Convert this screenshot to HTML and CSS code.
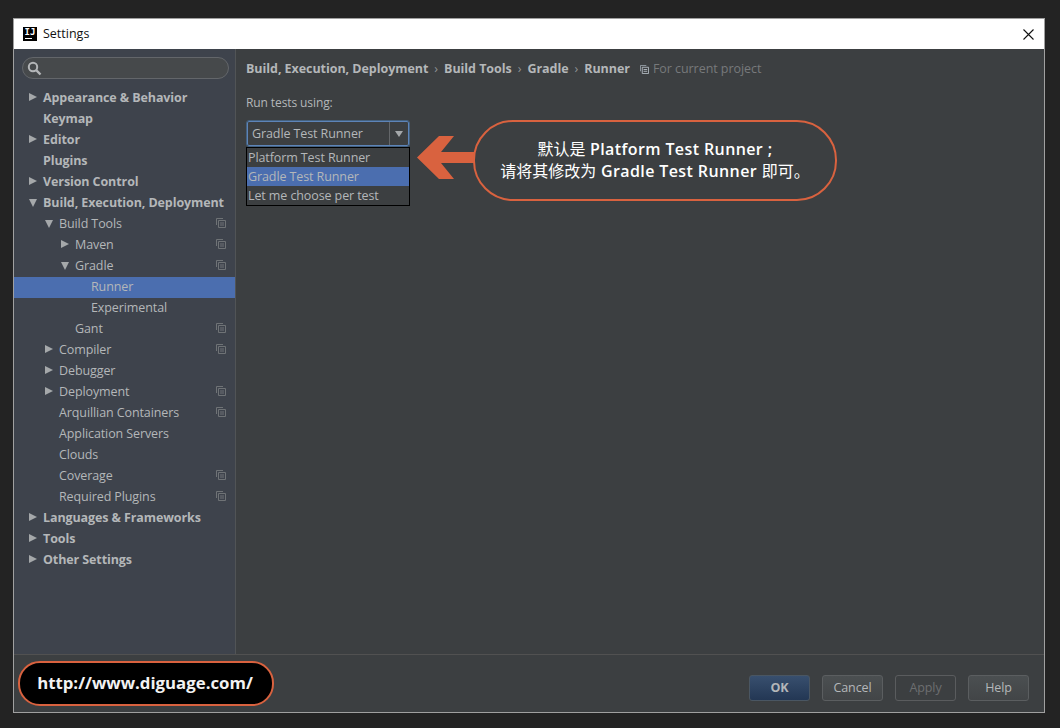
FILE: index.html
```html
<!DOCTYPE html>
<html lang="zh">
<head>
<meta charset="utf-8">
<title>Settings</title>
<link rel="stylesheet" href="styles.css">
</head>
<body>
<svg class="defs" width="0" height="0" aria-hidden="true">
  <symbol id="copy" viewBox="0 0 10 10">
    <path d="M0.5 7V0.5H7" fill="none" stroke="#6f7376"/>
    <path d="M2.5 2.5h7v7h-7z" fill="none" stroke="#6f7376"/>
    <path d="M4 5h4M4 7h4" fill="none" stroke="#6f7376"/>
  </symbol>
  <symbol id="copy-bright" viewBox="0 0 10 10">
    <path d="M0.5 7V0.5H7" fill="none" stroke="#9aa3ab"/>
    <path d="M2.5 2.5h7v7h-7z" fill="#3c3f41" stroke="#b4bcc4"/>
    <path d="M4 5h4M4 7h4" fill="none" stroke="#b4bcc4"/>
  </symbol>
</svg>
<main class="window">
  <header class="titlebar">
    <span class="logo"><span class="logo-text">IJ</span><span class="logo-bar"></span></span>
    <span class="title">Settings</span>
    <svg class="close" width="11" height="11" viewBox="0 0 11 11"><path d="M0.5 0.5l10 10M10.5 0.5l-10 10" stroke="#111" stroke-width="1.1" fill="none"/></svg>
  </header>
  <div class="body">
    <aside class="sidebar">
      <div class="search">
        <svg width="15" height="15" viewBox="0 0 15 15"><circle cx="6" cy="6" r="4.2" fill="none" stroke="#b4b6b8" stroke-width="2"/><path d="M9.2 9.2l4.3 4.3" stroke="#b4b6b8" stroke-width="2.4" fill="none"/></svg>
      </div>
      <nav class="tree">
        <div class="row l0 strong"><i class="tw right"></i><span>Appearance &amp; Behavior</span></div>
        <div class="row l0 strong"><i class="tw"></i><span>Keymap</span></div>
        <div class="row l0 strong"><i class="tw right"></i><span>Editor</span></div>
        <div class="row l0 strong"><i class="tw"></i><span>Plugins</span></div>
        <div class="row l0 strong"><i class="tw right"></i><span>Version Control</span></div>
        <div class="row l0 strong"><i class="tw down"></i><span>Build, Execution, Deployment</span></div>
        <div class="row l1"><i class="tw down"></i><span>Build Tools</span><svg class="ic"><use href="#copy"/></svg></div>
        <div class="row l2"><i class="tw right"></i><span>Maven</span><svg class="ic"><use href="#copy"/></svg></div>
        <div class="row l2"><i class="tw down"></i><span>Gradle</span><svg class="ic"><use href="#copy"/></svg></div>
        <div class="row l3 selected"><i class="tw"></i><span>Runner</span></div>
        <div class="row l3"><i class="tw"></i><span>Experimental</span></div>
        <div class="row l2"><i class="tw"></i><span>Gant</span><svg class="ic"><use href="#copy"/></svg></div>
        <div class="row l1"><i class="tw right"></i><span>Compiler</span><svg class="ic"><use href="#copy"/></svg></div>
        <div class="row l1"><i class="tw right"></i><span>Debugger</span></div>
        <div class="row l1"><i class="tw right"></i><span>Deployment</span><svg class="ic"><use href="#copy"/></svg></div>
        <div class="row l1"><i class="tw"></i><span>Arquillian Containers</span><svg class="ic"><use href="#copy"/></svg></div>
        <div class="row l1"><i class="tw"></i><span>Application Servers</span></div>
        <div class="row l1"><i class="tw"></i><span>Clouds</span></div>
        <div class="row l1"><i class="tw"></i><span>Coverage</span><svg class="ic"><use href="#copy"/></svg></div>
        <div class="row l1"><i class="tw"></i><span>Required Plugins</span><svg class="ic"><use href="#copy"/></svg></div>
        <div class="row l0 strong"><i class="tw right"></i><span>Languages &amp; Frameworks</span></div>
        <div class="row l0 strong"><i class="tw right"></i><span>Tools</span></div>
        <div class="row l0 strong"><i class="tw right"></i><span>Other Settings</span></div>
      </nav>
    </aside>
    <section class="content">
      <div class="crumbs">
        <b>Build, Execution, Deployment</b><em>›</em><b>Build Tools</b><em>›</em><b>Gradle</b><em>›</em><b>Runner</b>
        <svg class="ic project"><use href="#copy-bright"/></svg><span class="project-text">For current project</span>
      </div>
      <div class="field-label">Run tests using:</div>
      <div class="combo">
        <span class="combo-value">Gradle Test Runner</span>
        <span class="combo-btn"><i class="combo-arrow"></i></span>
      </div>
      <ul class="popup">
        <li>Platform Test Runner</li>
        <li class="active">Gradle Test Runner</li>
        <li>Let me choose per test</li>
      </ul>
      <svg class="arrow" width="57" height="44" viewBox="0 0 57 44"><path d="M0 21.5L22 0H37L24 16H57V27H24L37 43H22Z" fill="#d9623f"/></svg>
      <div class="callout"><span class="cn">默认是</span> Platform Test Runner ;<br><span class="cn">请将其修改为</span> Gradle Test Runner <span class="cn">即可。</span></div>
    </section>
  </div>
  <footer class="footer">
    <button class="btn primary">OK</button>
    <button class="btn">Cancel</button>
    <button class="btn disabled">Apply</button>
    <button class="btn">Help</button>
    <div class="badge">http://www.diguage.com/</div>
  </footer>
</main>
</body>
</html>
```
FILE: styles.css
```css
* { box-sizing: border-box; }
html, body { margin: 0; height: 100%; }
body {
  width: 1060px;
  height: 728px;
  padding: 18px 15px 15px 13px;
  background: #232323;
  font-family: "Open Sans", "Noto Sans CJK SC", sans-serif;
  font-size: 12.5px;
  letter-spacing: -0.1px;
  color: #b4b7b9;
  overflow: hidden;
}
.defs { position: absolute; }
.window {
  position: relative;
  height: 695px;
  border: 1px solid #a0a0a0;
  display: flex;
  flex-direction: column;
  background: #3c3f41;
}
.titlebar {
  height: 30px;
  flex: none;
  background: #fff;
  display: flex;
  align-items: center;
  padding: 0 10px 0 9px;
  color: #111;
}
.logo {
  width: 14px;
  height: 14px;
  background: #000;
  color: #fff;
  display: flex;
  flex-direction: column;
  align-items: center;
  font: bold 9px/10px "DejaVu Sans Mono", monospace;
  letter-spacing: 0;
  margin-right: 6px;
}
.logo-text { height: 10px; }
.logo-bar { width: 7px; height: 1px; background: #fff; margin: 1px 4px 0 0; }
.title { flex: 1; font-size: 12.5px; letter-spacing: 0; padding-bottom: 2px; }
.body { flex: 1; display: flex; min-height: 0; border-bottom: 1px solid #515151; }
.sidebar {
  width: 222px;
  flex: none;
  background: #3e434c;
  border-right: 1px solid #515456;
  padding-top: 8px;
}
.search {
  height: 22px;
  margin: 0 6px 0 8px;
  border: 1px solid #63666a;
  border-radius: 11px;
  background: #46494b;
  display: flex;
  align-items: center;
  padding-left: 4px;
}
.tree { margin-top: 9px; }
.row {
  height: 21px;
  display: flex;
  align-items: center;
  white-space: nowrap;
  padding-right: 9px;
  padding-bottom: 3px;
}
.row span { flex: 1; }
.l0 { padding-left: 15px; }
.l1 { padding-left: 31px; }
.l2 { padding-left: 47px; }
.l3 { padding-left: 63px; }
.strong { font-weight: 700; }
.selected { background: #4b6eaf; }
.tw { width: 14px; flex: none; display: block; position: relative; height: 9px; }
.tw.right::before {
  content: "";
  position: absolute;
  left: 0;
  top: 0;
  border-left: 8px solid #a5a8aa;
  border-top: 4.5px solid transparent;
  border-bottom: 4.5px solid transparent;
}
.tw.down::before {
  content: "";
  position: absolute;
  left: 0;
  top: 1px;
  border-top: 8px solid #a5a8aa;
  border-left: 4.5px solid transparent;
  border-right: 4.5px solid transparent;
}
.ic { width: 10px; height: 10px; flex: none; }
.content { flex: 1; position: relative; padding: 10px 10px 0 10px; background: #3c3f41; min-width: 0; }
.crumbs { display: flex; align-items: center; height: 19px; white-space: nowrap; letter-spacing: -0.05px; }
.crumbs b { font-weight: 700; }
.crumbs em { font-style: normal; margin: 0 6px; color: #8f9294; }
.ic.project { width: 9px; height: 9px; margin: 1px 4px 0 10px; }
.project-text { color: #77797b; }
.field-label { margin-top: 16px; font-size: 12px; height: 17px; line-height: 17px; }
.combo {
  width: 162px;
  height: 25px;
  margin: 10px 0 0 1px;
  display: flex;
  align-items: stretch;
  border: 1px solid #5d84b8;
  outline: 1px solid #44617f;
  border-radius: 2px;
  background: #3c3f41;
}
.combo-value { flex: 1; padding-left: 4px; line-height: 23px; }
.combo-btn { width: 19px; border-left: 1px solid #64676a; display: flex; align-items: center; justify-content: center; }
.combo-arrow {
  display: block;
  border-top: 6px solid #a5a8aa;
  border-left: 4px solid transparent;
  border-right: 4px solid transparent;
}
.popup {
  list-style: none;
  width: 164px;
  margin: 1px 0 0;
  padding: 0;
  border: 1px solid #000;
  background: #3c3f41;
}
.popup li { height: 19px; line-height: 20px; padding-left: 1px; white-space: nowrap; }
.popup li.active { background: #4b6eaf; }
.arrow { position: absolute; left: 181px; top: 87px; }
.callout {
  position: absolute;
  left: 237px;
  top: 71px;
  width: 364px;
  height: 81px;
  border: 2px solid #d9623f;
  border-radius: 40px;
  color: #fff;
  font-size: 16px;
  font-weight: 600;
  letter-spacing: 0.4px;
  line-height: 22px;
  text-align: center;
  padding-top: 16px;
  white-space: nowrap;
}
.cn { font-weight: 400; letter-spacing: 0; }
.footer {
  height: 57px;
  flex: none;
  display: flex;
  justify-content: flex-end;
  gap: 12px;
  padding: 20px 15px 0 0;
}
.btn {
  width: 61px;
  height: 26px;
  font: inherit;
  letter-spacing: inherit;
  color: #b4b7b9;
  border: 1px solid #5b5e60;
  border-radius: 3px;
  background: linear-gradient(#4b4f51, #424547);
  padding: 0 0 2px;
}
.btn.primary { font-weight: 700; background: linear-gradient(#384f6e, #233754); border-color: #4a5662; }
.btn.disabled { color: #6c6e70; background: none; border-color: #5a5c5e; }
.badge {
  position: absolute;
  left: 4px;
  bottom: 6px;
  width: 256px;
  height: 45px;
  border: 2px solid #d9623f;
  border-radius: 22px;
  background: #000;
  color: #f2f2f2;
  font-size: 16.8px;
  font-weight: 700;
  letter-spacing: 0;
  line-height: 40px;
  text-align: center;
  padding-right: 2px;
}
```
